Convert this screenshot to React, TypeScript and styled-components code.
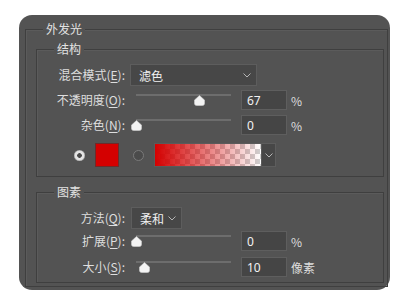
import React from 'react';
import styled, { createGlobalStyle } from 'styled-components';

const Global = createGlobalStyle`
  html, body { margin: 0; padding: 0; background: #ffffff; }
  body { font-family: "Noto Sans CJK SC", "Noto Sans", sans-serif; }
`;

const Page = styled.div`
  width: 402px;
  height: 306px;
  box-sizing: border-box;
  padding: 15px 0 0 19px;
`;

const Panel = styled.div`
  width: 371px;
  height: 275px;
  box-sizing: border-box;
  background: #535353;
  border-radius: 13px;
  padding: 6px 2px 3px 6px;
  display: flex;
  flex-direction: column;
`;

const Group = styled.fieldset<{ $outer?: boolean; $grow?: boolean; $mt?: number; $pt: number; $pb: number }>`
  margin: ${(p) => p.$mt ?? 0}px 0 0 0;
  min-width: 0;
  flex: ${(p) => (p.$grow ? '1 1 auto' : 'none')};
  border: 1px solid #3f3f3f;
  box-shadow: inset 1px 1px 0 #5b5b5b;
  padding: ${(p) => (p.$outer ? `${p.$pt}px 3px ${p.$pb}px 10px` : `${p.$pt}px 0 ${p.$pb}px 0`)};
  display: flex;
  flex-direction: column;
`;

const Legend = styled.legend<{ $ml: number }>`
  margin-left: ${(p) => p.$ml}px;
  padding: 0 3px;
  font-size: 12px;
  line-height: 16px;
  color: #e2e2e2;
  background: #535353;
`;

const Row = styled.div<{ $mt?: number; $h?: number }>`
  display: flex;
  align-items: center;
  height: ${(p) => p.$h ?? 20}px;
  margin-top: ${(p) => p.$mt ?? 0}px;
`;

const Label = styled.span`
  flex: none;
  width: 88px;
  margin-right: 5px;
  text-align: right;
  font-size: 12px;
  line-height: 16px;
  color: #dedede;
  white-space: nowrap;
  u { text-underline-offset: 2px; }
`;

const Select = styled.div<{ $w: number; $ml?: number }>`
  box-sizing: border-box;
  width: ${(p) => p.$w}px;
  height: 22px;
  margin-left: ${(p) => p.$ml ?? 0}px;
  display: flex;
  align-items: center;
  justify-content: space-between;
  padding: 0 5px 0 8px;
  background: #474747;
  border: 1px solid #5d5d5d;
  font-size: 12px;
  color: #f0f0f0;
`;

const SliderBox = styled.div`
  position: relative;
  flex: none;
  width: 106px;
  height: 20px;
`;

const Track = styled.div`
  position: absolute;
  left: 6px;
  right: 5px;
  top: 4px;
  height: 2px;
  background: #6d6d6d;
`;

const Thumb = styled.svg`
  position: absolute;
  top: 5px;
  width: 11px;
  height: 11px;
  margin-left: -5.5px;
`;

const NumBox = styled.div`
  box-sizing: border-box;
  flex: none;
  width: 46px;
  height: 20px;
  margin-left: 5px;
  padding-left: 5px;
  display: flex;
  align-items: center;
  background: #454545;
  border: 1px solid #5e5e5e;
  font-family: "Noto Sans", sans-serif;
  font-size: 12px;
  color: #f2f2f2;
`;

const Unit = styled.span`
  margin-left: 4px;
  font-size: 12px;
  color: #dedede;
`;

const ColorRow = styled.div`
  display: flex;
  align-items: center;
  height: 24px;
  margin-top: 8px;
  padding-left: 37px;
`;

const Radio = styled.span<{ $on?: boolean }>`
  flex: none;
  box-sizing: border-box;
  width: 11px;
  height: 11px;
  border-radius: 50%;
  background: ${(p) =>
    p.$on
      ? 'radial-gradient(circle, #4a4a4a 0 2px, #e4e4e4 2.6px 4.4px, #bdbdbd 5px)'
      : '#4b4b4b'};
  border: ${(p) => (p.$on ? 'none' : '1px solid #7a7a7a')};
`;

const Swatch = styled.span`
  flex: none;
  box-sizing: border-box;
  width: 24px;
  height: 24px;
  margin: 0 14px 0 10px;
  background: #d40000;
  border: 1px solid #6e2a2a;
`;

const Gradient = styled.span`
  flex: none;
  box-sizing: border-box;
  width: 108px;
  height: 24px;
  margin-left: 10px;
  border: 1px solid #5a5a5a;
  background:
    linear-gradient(to right, rgba(212, 0, 0, 1), rgba(212, 0, 0, 0.55) 45%, rgba(212, 0, 0, 0) 100%),
    repeating-conic-gradient(#cfcfcf 0% 25%, #ffffff 0% 50%) 0 0 / 10px 10px;
`;

const GradArrow = styled.span`
  flex: none;
  box-sizing: border-box;
  width: 14px;
  height: 24px;
  display: flex;
  align-items: center;
  justify-content: center;
  background: #474747;
  border: 1px solid #5d5d5d;
  border-left: none;
`;

const Chevron = () => (
  <svg width="8" height="5" viewBox="0 0 8 5">
    <polyline points="0.5,0.5 4,4 7.5,0.5" fill="none" stroke="#b5b5b5" strokeWidth="1" />
  </svg>
);

const Slider = ({ pct }: { pct: number }) => (
  <SliderBox>
    <Track />
    <Thumb viewBox="0 0 11 11" style={{ left: `${6 + (95 * pct) / 100}px` }}>
      <path d="M5.5 0.5 L10.5 5 L10.5 8.5 Q10.5 10.5 8.5 10.5 L2.5 10.5 Q0.5 10.5 0.5 8.5 L0.5 5 Z" fill="#f3f3f3" stroke="#d0d0d0" strokeWidth="0.6" />
    </Thumb>
  </SliderBox>
);

const SliderRow = ({
  label,
  pct,
  value,
  unit,
  mt,
}: {
  label: React.ReactNode;
  pct: number;
  value: string;
  unit: string;
  mt: number;
}) => (
  <Row $mt={mt}>
    <Label>{label}</Label>
    <Slider pct={pct} />
    <NumBox>{value}</NumBox>
    <Unit>{unit}</Unit>
  </Row>
);

export default function App() {
  return (
    <>
      <Global />
      <Page>
        <Panel>
          <Group $outer $grow $pt={4} $pb={3}>
            <Legend $ml={7}>外发光</Legend>
            <Group $pt={7} $pb={9}>
              <Legend $ml={17}>结构</Legend>
              <Row $h={22}>
                <Label>
                  混合模式(<u>E</u>):
                </Label>
                <Select $w={127}>
                  <span>滤色</span>
                  <Chevron />
                </Select>
              </Row>
              <SliderRow
                mt={4}
                label={<>不透明度(<u>O</u>):</>}
                pct={67}
                value="67"
                unit="%"
              />
              <SliderRow mt={5} label={<>杂色(<u>N</u>):</>} pct={0} value="0" unit="%" />
              <ColorRow>
                <Radio $on />
                <Swatch />
                <Radio />
                <Gradient />
                <GradArrow>
                  <Chevron />
                </GradArrow>
              </ColorRow>
            </Group>
            <Group $grow $mt={7} $pt={7} $pb={5}>
              <Legend $ml={17}>图素</Legend>
              <Row $h={22}>
                <Label>
                  方法(<u>Q</u>):
                </Label>
                <Select $w={51} $ml={1}>
                  <span>柔和</span>
                  <Chevron />
                </Select>
              </Row>
              <SliderRow mt={2} label={<>扩展(<u>P</u>):</>} pct={0} value="0" unit="%" />
              <SliderRow mt={6} label={<>大小(<u>S</u>):</>} pct={9} value="10" unit="像素" />
            </Group>
          </Group>
        </Panel>
      </Page>
    </>
  );
}
